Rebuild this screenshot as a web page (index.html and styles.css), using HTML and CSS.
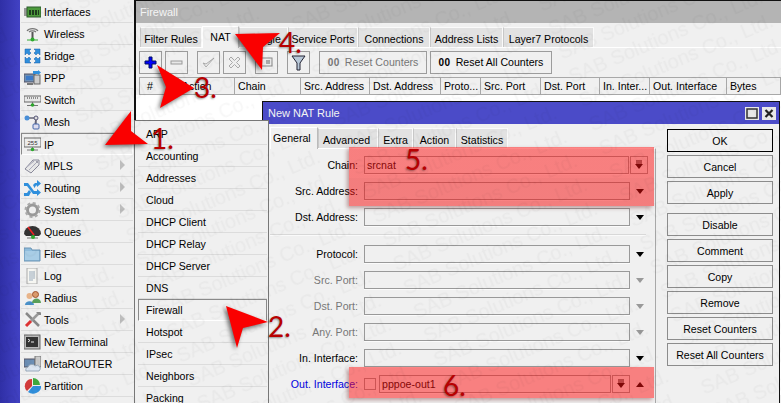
FILE: index.html
```html
<!DOCTYPE html>
<html lang="en">
<head>
<meta charset="utf-8">
<title>New NAT Rule</title>
<link rel="stylesheet" href="styles.css">
</head>
<body>
<div class="screen">
  <nav class="sidebar">
    <div class="item"><svg class="ico" viewBox="0 0 17 16"><rect x="0" y="4" width="3" height="8" fill="#999"/><rect x="3" y="3" width="14" height="10" fill="#4c9a3c" stroke="#2c5c2c"/><path d="M5 6h2v5H5zM8 6h2v5H8zM11 6h2v5h-2zM14 6h1v5h-1z" fill="#1d3d1d"/></svg><span>Interfaces</span></div>
    <div class="item"><svg class="ico" viewBox="0 0 17 16"><path d="M3 5a6 4 0 0 1 11 0M5 6a4 2 0 0 1 7 0" fill="none" stroke="#777" stroke-width="1.2"/><path d="M8.5 6v7" stroke="#555" stroke-width="2"/><path d="M3 14h11" stroke="#3a3" stroke-width="1"/><circle cx="8.500" cy="13.500" r="2" fill="#2eaa2e"/></svg><span>Wireless</span></div>
    <div class="item"><svg class="ico" viewBox="0 0 17 16"><path d="M1 1h6L5 3l2 2-2 2-2-2-2 2zM16 1h-6l2 2-2 2 2 2 2-2 2 2zM1 15h6l-2-2 2-2-2-2-2 2-2-2zM16 15h-6l2-2-2-2 2-2 2 2 2-2z" fill="#2f8fdc" stroke="#1a5fa8" stroke-width=".5"/></svg><span>Bridge</span></div>
    <div class="item"><svg class="ico" viewBox="0 0 17 16"><rect x="0" y="4" width="11" height="8" fill="#6d8fb5" stroke="#556"/><rect x="2" y="6" width="7" height="4" fill="#3c7ac8"/><rect x="10" y="5" width="6" height="9" fill="#ccc" stroke="#666"/><path d="M9 1h5V0l3 2.500-3 2.500V4H9z" fill="#2f8fdc"/><path d="M3 13h6v2H3z" fill="#777"/></svg><span>PPP</span></div>
    <div class="item"><svg class="ico" viewBox="0 0 17 16"><rect x="0" y="4" width="17" height="6" fill="#e8e8e8" stroke="#666"/><path d="M3 6h1M5 6h1M7 6h1M9 6h1M11 6h1M13 6h1" stroke="#333"/><path d="M8.500 10v3M3 13.500h11" stroke="#777"/><circle cx="8.500" cy="13" r="1.800" fill="#2eaa2e"/></svg><span>Switch</span></div>
    <div class="item"><svg class="ico" viewBox="0 0 17 16"><path d="M3 4h9v9M12 4l-1 8" fill="none" stroke="#667" stroke-width="1.500"/><circle cx="3" cy="4" r="2.500" fill="#4a90d9"/><circle cx="12" cy="4" r="2" fill="#ddd" stroke="#557"/><rect x="9" y="10" width="6" height="5" rx="1" fill="#dde" stroke="#46a"/></svg><span>Mesh</span></div>
    <div class="item active"><svg class="ico" viewBox="0 0 17 16"><rect x="0" y="2" width="17" height="9" fill="#eee" stroke="#666"/><text x="8.500" y="9" class="ico-text">255</text><path d="M8.500 11v3M3 14h11" stroke="#777"/><circle cx="8.500" cy="13.500" r="1.800" fill="#2eaa2e"/></svg><span>IP</span></div>
    <div class="item"><svg class="ico" viewBox="0 0 17 16"><path d="M1 11 9 2h6v5l-8 8z" fill="#e8e8e8" stroke="#889"/><path d="M3 9 10 3M5 12l7-7" stroke="#aab"/><circle cx="13" cy="4" r="1" fill="#889"/></svg><span>MPLS</span><i class="more"></i></div>
    <div class="item"><svg class="ico" viewBox="0 0 17 16"><path d="M0 3h4l6 8h3V9l4 3.500L13 16v-2H9L3 6H0zM0 13h3l2-3 2 2-2 4H0zM9 5l2-2h2V0l4 3.500L13 7V5.500h-1L10.500 8z" fill="#2f8fdc"/></svg><span>Routing</span><i class="more"></i></div>
    <div class="item"><svg class="ico" viewBox="0 0 17 16"><circle cx="8.500" cy="8" r="5" fill="none" stroke="#999" stroke-width="3"/><circle cx="8.500" cy="8" r="7" fill="none" stroke="#aaa" stroke-width="2" stroke-dasharray="3 2.500"/><circle cx="8.500" cy="8" r="1.800" fill="#eee"/></svg><span>System</span><i class="more"></i></div>
    <div class="item"><svg class="ico" viewBox="0 0 17 16"><path d="M0 10a8.500 8 0 0 1 17 0l-2 2H2z" fill="#333"/><path d="M4 3l6 8" stroke="#e22" stroke-width="1.500"/><path d="M3 14h11" stroke="#777"/><circle cx="9" cy="13" r="2" fill="#2eaa2e"/></svg><span>Queues</span></div>
    <div class="item"><svg class="ico" viewBox="0 0 17 16"><path d="M0 2h7l1 2h8v11H0z" fill="#8fbcdc" stroke="#6a94b4"/><path d="M1 5h14v9H1z" fill="#a8cde6"/></svg><span>Files</span></div>
    <div class="item"><svg class="ico" viewBox="0 0 17 16"><path d="M3 0h10v16H3z" fill="#f6f6f2" stroke="#aaa"/><path d="M5 4h6M5 6h6M5 8h6M5 10h6M5 12h4" stroke="#9ab"/></svg><span>Log</span></div>
    <div class="item"><svg class="ico" viewBox="0 0 17 16"><circle cx="5.500" cy="6" r="3" fill="#e8b48a"/><path d="M1 15c0-5 9-5 9 0z" fill="#4a90c8"/><circle cx="11.500" cy="4.500" r="3" fill="#d99a6c" stroke="#a0522d"/><path d="M8 13c0-6 9-6 9 0z" fill="#5aa05a"/></svg><span>Radius</span></div>
    <div class="item"><svg class="ico" viewBox="0 0 17 16"><path d="M2 1l13 13" stroke="#888" stroke-width="2.500"/><path d="M15 1 7 9" stroke="#999" stroke-width="2.500"/><path d="M7 9l-5 5" stroke="#d33" stroke-width="3"/><path d="M12 0a3 3 0 0 1 5 3l-2 0-2-2z" fill="#888"/></svg><span>Tools</span><i class="more"></i></div>
    <div class="item"><svg class="ico" viewBox="0 0 17 16"><rect x="0" y="1" width="16" height="14" fill="#bbb" stroke="#666"/><rect x="2" y="3" width="12" height="10" fill="#333"/><path d="M4 5l2 1.500L4 8M7 8h3" stroke="#eee" fill="none"/></svg><span>New Terminal</span></div>
    <div class="item"><svg class="ico" viewBox="0 0 17 16"><rect x="0" y="3" width="11" height="8" fill="#6d8fb5" stroke="#556"/><rect x="11" y="0" width="6" height="11" fill="#ccc" stroke="#777"/><path d="M2 15a3 3 0 0 1 2-4 4 4 0 0 1 7-1 3 3 0 0 1 4 5z" fill="#dde6f2" stroke="#9ab"/></svg><span>MetaROUTER</span></div>
    <div class="item"><svg class="ico" viewBox="0 0 17 16"><path d="M8 8V1a7 7 0 0 0-5 12z" fill="#d23a3a"/><path d="M9 7V0a7 7 0 0 1 7 7z" fill="#3fa83f"/><path d="M9 8h8a8 7 0 0 1-13 6z" fill="#2f8fdc"/></svg><span>Partition</span></div>
  </nav>

  <section class="window firewall">
    <header class="title grey">Firewall</header>
    <div class="tabs fw-tabs">
      <span class="tab t62">Filter Rules</span>
      <span class="tab on t37">NAT</span>
      <span class="tab t49">Mangle</span>
      <span class="tab t70">Service Ports</span>
      <span class="tab t72">Connections</span>
      <span class="tab t73">Address Lists</span>
      <span class="tab t91">Layer7 Protocols</span>
    </div>
    <div class="toolbar">
      <button class="tb">
        <svg viewBox="0 0 13 13" class="tb-ico"><path d="M5 1h3v4h4v3H8v4H5V8H1V5h4z" fill="#0000ff" stroke="#001060"/></svg>
      </button>
      <button class="tb">
        <svg viewBox="0 0 13 13" class="tb-ico"><rect x="1" y="5" width="11" height="3" fill="#e8e8e8" stroke="#999"/></svg>
      </button>
      <button class="tb gap9">
        <svg viewBox="0 0 13 13" class="tb-ico"><path d="M1 7l3 4 8-9-8 6z" fill="#eee" stroke="#aaa"/></svg>
      </button>
      <button class="tb">
        <svg viewBox="0 0 13 13" class="tb-ico"><path d="M3 1l3.500 3.500L10 1l2 2-3.500 3.500L12 10l-2 2-3.500-3.500L3 12l-2-2 3.500-3.500L1 3z" fill="#eee" stroke="#aaa"/></svg>
      </button>
      <button class="tb gap9">
        <svg viewBox="0 0 13 13" class="tb-ico"><rect x="1" y="2" width="11" height="8" fill="#eee" stroke="#888"/><path d="M6 5h4M6 7h4" stroke="#666"/></svg>
      </button>
      <button class="tb gap9">
        <svg viewBox="0 0 15 16" class="tb-ico filter"><path d="M1 1h13L9 8v7H6V8z" fill="#b8c8d8" stroke="#223"/></svg>
      </button>
      <button class="tb wide w107 gap9 dim"><b>00</b> Reset Counters</button>
      <button class="tb wide w122"><b>00</b> Reset All Counters</button>
    </div>
    <div class="thead">
      <span class="c41 first">#</span>
      <span class="c55">Action</span>
      <span class="c66">Chain</span>
      <span class="c69">Src. Address</span>
      <span class="c71">Dst. Address</span>
      <span class="c40">Proto...</span>
      <span class="c60">Src. Port</span>
      <span class="c59">Dst. Port</span>
      <span class="c50">In. Inter...</span>
      <span class="c77">Out. Interface</span>
      <span class="c54">Bytes</span>
    </div>
    <div class="tbody"></div>
  </section>

  <section class="window dialog">
    <header class="title blue">
      <span>New NAT Rule</span>
      <span class="winbtns">
        <i class="winbtn"><svg viewBox="0 0 14 13"><rect x="2" y="2" width="10" height="9" fill="none" stroke="#333" stroke-width="1.500"/></svg></i>
        <i class="winbtn"><svg viewBox="0 0 14 13"><path d="M3.500 3l7 7M10.500 3l-7 7" stroke="#222" stroke-width="2.200"/></svg></i>
      </span>
    </header>
    <div class="dialog-body">
      <div class="left-col">
        <div class="tabs dlg-tabs">
          <span class="tab on t47">General</span>
          <span class="tab t60">Advanced</span>
          <span class="tab t35">Extra</span>
          <span class="tab t43">Action</span>
          <span class="tab t52">Statistics</span>
        </div>
        <div class="pane">
          <div class="row"><label>Chain:</label><div class="input short">srcnat</div><div class="barbtn"><svg viewBox="0 0 10 10"><path d="M2 1h6M2 3h6" stroke="#000"/><path d="M1 4h8L5 9z"/></svg></div></div>
          <div class="row"><label>Src. Address:</label><div class="input"></div><i class="tri"></i></div>
          <div class="row"><label>Dst. Address:</label><div class="input"></div><i class="tri"></i></div>
          <div class="sep"></div>
          <div class="row"><label>Protocol:</label><div class="input"></div><i class="tri"></i></div>
          <div class="row off"><label>Src. Port:</label><div class="input"></div><i class="tri"></i></div>
          <div class="row off"><label>Dst. Port:</label><div class="input"></div><i class="tri"></i></div>
          <div class="row off"><label>Any. Port:</label><div class="input"></div><i class="tri"></i></div>
          <div class="row"><label>In. Interface:</label><div class="input"></div><i class="tri"></i></div>
          <div class="row"><label class="link">Out. Interface:</label><i class="check"></i><div class="input out">pppoe-out1</div><div class="barbtn mini"><svg viewBox="0 0 10 10"><path d="M2 1h6M2 3h6" stroke="#000"/><path d="M1 4h8L5 9z"/></svg></div><i class="tri up"></i></div>
        </div>
      </div>
      <div class="actions">
        <button class="act default">OK</button>
        <button class="act">Cancel</button>
        <button class="act">Apply</button>
        <button class="act spaced">Disable</button>
        <button class="act">Comment</button>
        <button class="act">Copy</button>
        <button class="act">Remove</button>
        <button class="act">Reset Counters</button>
        <button class="act">Reset All Counters</button>
      </div>
    </div>
  </section>

  <aside class="submenu">
    <div class="sub">ARP</div>
    <div class="sub">Accounting</div>
    <div class="sub">Addresses</div>
    <div class="sub">Cloud</div>
    <div class="sub">DHCP Client</div>
    <div class="sub">DHCP Relay</div>
    <div class="sub">DHCP Server</div>
    <div class="sub">DNS</div>
    <div class="sub active">Firewall</div>
    <div class="sub">Hotspot</div>
    <div class="sub">IPsec</div>
    <div class="sub">Neighbors</div>
    <div class="sub">Packing</div>
  </aside>

  <div class="mark mark-top"></div>
  <div class="mark mark-bottom"></div>

  <svg class="watermark" viewBox="0 0 781 403" aria-hidden="true">
    <defs>
      <pattern id="wm" patternUnits="userSpaceOnUse" width="235" height="26" patternTransform="translate(427 343) rotate(-23) translate(0 -20)">
        <text x="0" y="20" class="wm-text">SAB Solutions Co., Ltd.</text>
      </pattern>
    </defs>
    <rect width="781" height="403" fill="url(#wm)"/>
  </svg>

  <svg class="arrows" viewBox="0 0 781 403">
    <polygon points="105,145 131,111 131,131 148,144"/>
    <polygon points="226,306 268,322 243,328 237,348"/>
    <polygon points="157,65 194,88 160,108 166,87"/>
    <polygon points="235,34 280,33 263,47 262,70"/>
  </svg>
  <span class="num n1">1.</span>
  <span class="num n2">2.</span>
  <span class="num n3">3.</span>
  <span class="num n4">4.</span>
  <span class="num n5">5.</span>
  <span class="num n6">6.</span>
</div>
</body>
</html>
```

FILE: styles.css
```css
* { box-sizing: border-box; }
html, body { margin: 0; padding: 0; }
body { overflow: hidden; background: #3c3cb8; }
.screen {
  position: relative; width: 781px; height: 403px; overflow: hidden;
  background: linear-gradient(90deg, #2f2fa6, #4242c4 20px);
  font: 10.6px/1 "Liberation Sans", Arial, sans-serif; color: #000;
}

/* left menu */
.sidebar { position: absolute; left: 20px; top: 0; width: 114px; height: 403px; background: #f0f0f0; padding: 1px 1px 0 1px; display: flex; flex-direction: column; }
.item { flex: 0 0 22px; display: flex; align-items: center; gap: 3px; padding-left: 3px; border-bottom: 1px solid #dcdcdc; position: relative; }
.item span { padding-top: 2px; }
.item.active { border: 1px solid; border-color: #8a8a8a #fff #fff #8a8a8a; padding-left: 2px; }
.ico { width: 17px; height: 16px; flex: none; }
.ico-text { font: 6px "Liberation Sans", sans-serif; text-anchor: middle; fill: #333; }
.more { position: absolute; right: 8px; top: 5px; width: 0; height: 0; border-left: 5px solid #bdbdbd; border-top: 5px solid transparent; border-bottom: 5px solid transparent; }

/* windows */
.window { position: absolute; background: #f0f0f0; }
.firewall { left: 134px; top: 0; width: 660px; height: 403px; border: 1px solid #111; border-width: 1px 0 0 2px; }
.title { height: 22px; display: flex; align-items: center; padding-left: 5px; color: #f4f4f4; font-size: 11px; }
.firewall .title { padding-left: 4px; }
.title.grey { background: #b4b4b4; }
.title.blue { background: #4b4bc8; justify-content: space-between; padding-right: 3px; }

.tabs { display: flex; align-items: flex-end; }
.tab { height: 20px; padding-top: 3px; display: flex; align-items: center; justify-content: center; background: #e2e2e2; border: 1px solid #fafafa; border-left-color: #c8c8c8; border-bottom: 0; white-space: nowrap; }
.tab.on { height: 22px; padding-top: 0; background: #f0f0f0; border-color: #fff #bbb #f0f0f0 #fff; margin-bottom: -1px; position: relative; }
.fw-tabs { margin: 1px 0 0 4px; height: 24px; border-bottom: 1px solid #fff; }
.t62 { width: 62px; } .t37 { width: 37px; } .t49 { width: 49px; } .t70 { width: 70px; } .t72 { width: 72px; } .t73 { width: 73px; } .t91 { width: 91px; }
.t47 { width: 48px; justify-content: flex-start; padding-left: 2px; } .t60 { width: 60px; justify-content: flex-start; padding-left: 4px; } .t35 { width: 35px; } .t43 { width: 43px; } .t52 { width: 52px; }

.toolbar { display: flex; margin: 3px 0 0 3px; gap: 3px; height: 23px; }
button { font: inherit; color: #000; padding: 1px 0 0; background: #f0f0f0; }
.tb { width: 23px; height: 23px; border: 1px solid #9c9c9c; display: flex; align-items: center; justify-content: center; gap: 5px; padding: 0; }
.gap9 { margin-left: 6px; }
.tb-ico { width: 13px; height: 13px; }
.tb-ico.filter { width: 15px; height: 16px; }
.wide b { font-size: 10px; letter-spacing: .5px; }
.w107 { width: 108px; } .w122 { width: 122px; }
.dim { color: #777; }

.thead { display: flex; margin: 3px 0 0 3px; height: 18px; border: 1px solid #a8a8a8; border-width: 1px 0; white-space: nowrap; }
.thead span { display: flex; align-items: center; padding: 1px 0 0 3px; border-right: 1px solid #a8a8a8; overflow: hidden; flex: none; }
.thead .first { padding-left: 7px; border-left: 1px solid #a8a8a8; }
.c41 { width: 40px; } .c55 { width: 56px; } .c66 { width: 66px; } .c69 { width: 69px; } .c71 { width: 71px; } .c40 { width: 40px; } .c60 { width: 60px; } .c59 { width: 59px; } .c50 { width: 50px; } .c77 { width: 77px; } .c54 { width: 54px; }
.tbody { background: #fff; height: 300px; }

/* dialog */
.dialog { left: 262px; top: 101px; width: 518px; height: 302px; border: 1px solid #111; border-width: 1px 1px 0 1px; }
.winbtns { display: flex; gap: 3px; }
.winbtn { width: 14px; height: 13px; background: #e8e8e8; display: block; }
.winbtn svg { display: block; width: 14px; height: 13px; }
.dialog-body { display: flex; padding: 4px 6px 0 7px; gap: 11px; }
.left-col { width: 386px; }
.dlg-tabs { height: 20px; }
.dlg-tabs .tab.on { margin-top: -2px; }
.pane { border-right: 1px solid #a8a8a8; border-top: 1px solid #fff; padding-top: 7px; height: 260px; display: flex; flex-direction: column; gap: 8px; }
.row { display: flex; align-items: center; height: 18px; flex: none; }
.row label { width: 88px; text-align: right; margin-right: 6px; padding-top: 1px; flex: none; }
.row .link { color: #0000e0; }
.row.off label { color: #777; }
.input { width: 266px; height: 18px; border: 1px solid #999; box-shadow: 0 1px 0 #fbfbfb; background: #f0f0f0; display: flex; align-items: center; padding: 1px 0 0 2px; flex: none; }
.input.short { width: 265px; }
.input.out { width: 232px; margin-left: 3px; }
.tri { margin-left: 6px; width: 0; height: 0; border-left: 4.500px solid transparent; border-right: 4.500px solid transparent; border-top: 5px solid #000; flex: none; }
.tri.up { border-top: 0; border-bottom: 5px solid #000; }
.off .tri { border-top-color: #999; }
.check { width: 12px; height: 12px; border: 1px solid #999; background: #f0f0f0; flex: none; }
.barbtn { width: 18px; height: 18px; margin-left: 1px; border: 1px solid #999; display: flex; align-items: center; justify-content: center; flex: none; }
.barbtn svg { width: 10px; height: 10px; }
.barbtn.mini + .tri { margin-left: 6px; }
.sep { height: 2px; flex: none; margin: 0 9px 1px 0; border-top: 1px solid #d8d8d8; border-bottom: 1px solid #fafafa; }

.actions { width: 106px; display: flex; flex-direction: column; gap: 3px; padding-top: 1px; }
.act { height: 23px; border: 1px solid #8c8c8c; flex: none; }
.act.default { border-color: #000; }
.act.spaced { margin-top: 6px; }

/* sub menu */
.submenu { position: absolute; left: 134px; top: 120px; width: 135px; height: 283px; background: #f0f0f0; border: 1px solid #777; border-width: 1px 1px 0 1px; padding: 2px 0 0 3px; display: flex; flex-direction: column; }
.sub { flex: 0 0 22px; display: flex; align-items: center; padding: 2px 0 0 8px; margin-right: 1px; border-bottom: 1px solid #dcdcdc; }
.sub.active { border: 1px solid; border-color: #8a8a8a #8a8a8a #fff #8a8a8a; padding: 1px 0 0 7px; }

/* annotations */
.mark { position: absolute; left: 349px; width: 305px; box-shadow: -2px 2px 4px rgba(90, 0, 0, .35); }
.mark-top { top: 147px; height: 59px; background: linear-gradient(rgba(255, 16, 16, .5) 31px, rgba(246, 12, 12, .5) 31px); }
.mark-bottom { top: 367px; height: 31px; background: rgba(255, 16, 16, .5); }

.watermark { position: absolute; left: 0; top: 0; width: 781px; height: 403px; pointer-events: none; }
.wm-text { font: 20px "Liberation Sans", sans-serif; fill: rgba(0, 0, 0, .03); }

.arrows { position: absolute; left: 0; top: 0; width: 781px; height: 403px; fill: #fa0000; filter: drop-shadow(-2px 2px 2px rgba(0, 0, 0, .55)); }
.num { position: absolute; font: 28px/1 Lato, sans-serif; color: #b80000; text-shadow: -1px 1px 2px rgba(0, 0, 0, .4); }
.n1 { left: 151px; top: 124px; }
.n2 { left: 268px; top: 312px; }
.n3 { left: 194px; top: 73px; }
.n4 { left: 279px; top: 28px; }
.n5 { left: 405px; top: 145px; }
.n6 { left: 443px; top: 371px; }
```
